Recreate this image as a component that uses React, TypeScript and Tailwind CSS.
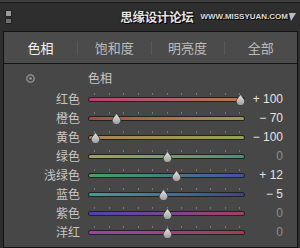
import React from "react";

const rows = [
  { label: "红色", value: 100, grad: "bg-linear-to-r from-[#b34274] to-[#b27650]" },
  { label: "橙色", value: -70, grad: "bg-linear-to-r from-[#a64a4a] to-[#9c9c52]" },
  { label: "黄色", value: -100, grad: "bg-linear-to-r from-[#ac8250] to-[#92a452]" },
  { label: "绿色", value: 0, grad: "bg-linear-to-r from-[#a0a452] to-[#42927a]" },
  { label: "浅绿色", value: 12, grad: "bg-linear-to-r from-[#48a256] to-[#4252a2]" },
  { label: "蓝色", value: -5, grad: "bg-linear-to-r from-[#40a092] to-[#423e96]" },
  { label: "紫色", value: 0, grad: "bg-linear-to-r from-[#5040b0] to-[#a23e66]" },
  { label: "洋红", value: 0, grad: "bg-linear-to-r from-[#a040a2] to-[#a43c52]" },
];

const tabs = ["色相", "饱和度", "明亮度", "全部"];

const fmt = (v: number) => (v > 0 ? `+ ${v}` : v < 0 ? `− ${-v}` : "0");

const Thumb = ({ left }: { left: number }) => (
  <svg
    width="11"
    height="11"
    viewBox="0 0 11 11"
    className="absolute top-[-5px]"
    style={{ left: left - 5.5 }}
  >
    <defs>
      <linearGradient id="tg" x1="0" y1="0" x2="0" y2="1">
        <stop offset="0" stopColor="#e8e8e8" />
        <stop offset="1" stopColor="#9a9a9a" />
      </linearGradient>
    </defs>
    <path
      d="M5.5 0.5 L9.6 6 A4.3 4.3 0 1 1 1.4 6 Z"
      fill="url(#tg)"
      stroke="#3a3a3a"
      strokeWidth="0.8"
    />
  </svg>
);

const Slider = ({ value, grad }: { value: number; grad: string }) => {
  const left = 7 + ((value + 100) / 200) * 145;
  return (
    <div className="relative w-[157px] h-[19px]">
      <div className="absolute left-[6px] top-[4px] flex gap-[13.5px]">
        {Array.from({ length: 11 }).map((_, i) => (
          <div key={i} className="w-px h-[2px] bg-[#767676]" />
        ))}
      </div>
      <div className="absolute left-0 right-0 top-[8px] h-[5px] rounded-full bg-[#222] p-px">
        <div className={`h-[3px] rounded-full ${grad}`} />
      </div>
      <div className="absolute top-[10px] left-0">
        <Thumb left={left} />
      </div>
    </div>
  );
};

export default function App() {
  return (
    <div className="w-[300px] h-[248px] bg-[#2e2e2e] overflow-hidden font-['Noto_Sans_CJK_SC',sans-serif]">
      <div className="h-[3px] bg-[#3d3d3d] border-b border-[#1c1c1c]" />
      <div className="h-[28px] flex items-center pl-[5px] pr-[4px]">
        <div className="flex flex-col gap-px">
          <div className="w-[7px] h-[7px] bg-[#9a9a9a] border border-[#222]" />
          <div className="w-[7px] h-[6px] bg-[#6e6e6e] border border-[#222]" />
        </div>
        <div className="ml-auto flex items-center">
          <span className="text-[12.5px] font-bold text-[#e4e4e4] leading-none tracking-[-0.3px] [text-shadow:0_0_2px_#000,1px_1px_0_#000]">
            思缘设计论坛
          </span>
          <span className="ml-[7px] text-[8px] font-bold text-[#d8d8d8] leading-none font-['Liberation_Sans',sans-serif] [text-shadow:1px_1px_0_#000]">
            WWW.MISSYUAN.COM
          </span>
          <svg width="7" height="8" viewBox="0 0 7 8" className="ml-[1px]">
            <path d="M0 0 L7 0 L2 8 Z" fill="#bdbdbd" />
          </svg>
        </div>
      </div>
      <div className="ml-[3px] mr-[2px] h-[217px] border-l border-r border-b border-[#121212] bg-[#474747]">
        <div className="h-[33px] bg-[#4b4b4b] border-t border-b border-[#141414] flex items-center">
          {tabs.map((t, i) => (
            <div key={t} className="flex-1 flex items-center h-full">
              {i > 0 && <div className="w-px h-[14px] bg-[#2c2c2c] border-r border-[#5a5a5a]" />}
              <div
                className={`flex-1 text-center text-[13px] leading-none ${
                  i === 0 ? "text-[#f2f2f2]" : "text-[#bcbcbc]"
                }`}
              >
                {t}
              </div>
            </div>
          ))}
        </div>
        <div className="pt-[5px]">
          <div className="h-[18px] flex items-center">
            <div className="w-[52px] flex justify-center">
              <svg width="9" height="9" viewBox="0 0 9 9">
                <circle cx="4.5" cy="4.5" r="3.7" fill="none" stroke="#9a9a9a" strokeWidth="1.2" />
                <circle cx="4.5" cy="4.5" r="1.3" fill="#9a9a9a" />
              </svg>
            </div>
            <div className="ml-[32px] text-[12px] text-[#c8c8c8] leading-none">色相</div>
          </div>
          <div className="mt-[2px]">
            {rows.map((r) => (
              <div key={r.label} className="h-[19px] flex items-center">
                <div className="w-[76px] text-right text-[12px] text-[#c6c6c6] leading-none">
                  {r.label}
                </div>
                <div className="ml-[8px]">
                  <Slider value={r.value} grad={r.grad} />
                </div>
                <div
                  className={`w-[38px] text-right text-[12px] leading-none font-['Liberation_Sans',sans-serif] ${
                    r.value === 0 ? "text-[#8e8e8e]" : "text-[#e2e2e2]"
                  }`}
                >
                  {fmt(r.value)}
                </div>
              </div>
            ))}
          </div>
        </div>
      </div>
    </div>
  );
}
